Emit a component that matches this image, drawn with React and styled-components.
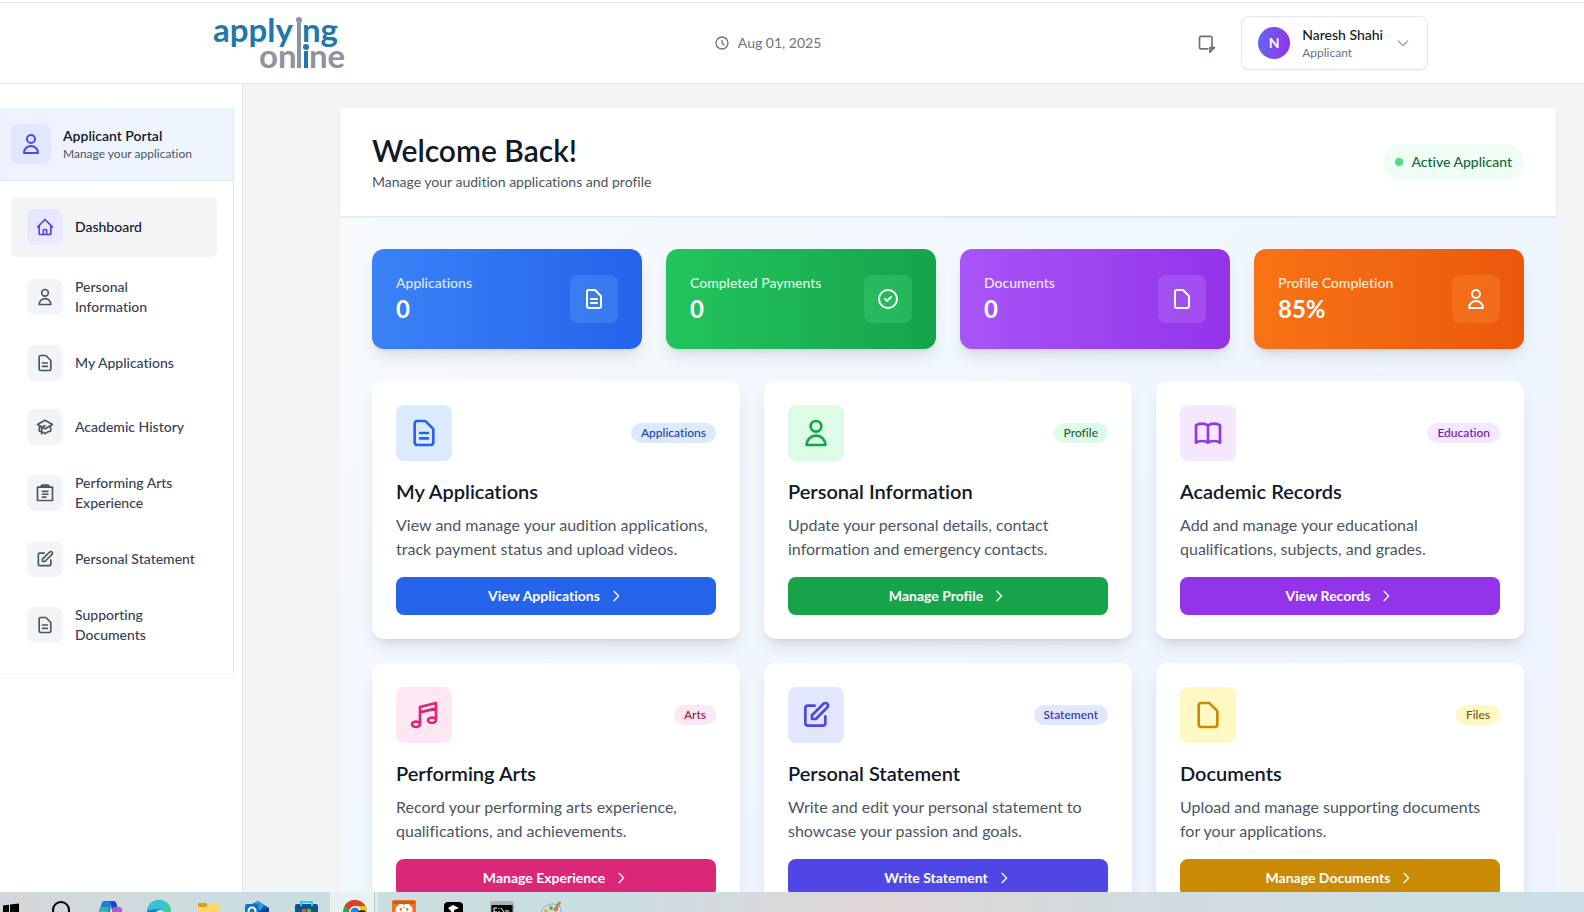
import React from "react"
import styled, { createGlobalStyle, css } from "styled-components"

const GlobalStyle = createGlobalStyle`
  *, *::before, *::after {
    box-sizing: border-box;
  }

  body {
    margin: 0;
    font-family: Lato, "Liberation Sans", sans-serif;
    font-size: 14px;
    line-height: 20px;
    font-variant-ligatures: none;
    color: #111827;
    background: #ffffff;
  }

  h1, h2, h3, p, ul {
    margin: 0;
    padding: 0;
  }

  ul {
    list-style: none;
  }

  button {
    font: inherit;
    font-variant-ligatures: none;
    cursor: pointer;
  }

  a {
    color: inherit;
    text-decoration: none;
  }
`

/* ---------- icons ---------- */

const paths = {
  user: [
    "M16 7a4 4 0 11-8 0 4 4 0 018 0z",
    "M12 14a7 7 0 00-7 7h14a7 7 0 00-7-7z",
  ],
  documentText: [
    "M9 12h6m-6 4h6m2 5H7a2 2 0 01-2-2V5a2 2 0 012-2h5.586a1 1 0 01.707.293l5.414 5.414a1 1 0 01.293.707V19a2 2 0 01-2 2z",
  ],
  document: [
    "M7 21h10a2 2 0 002-2V9.414a1 1 0 00-.293-.707l-5.414-5.414A1 1 0 0012.586 3H7a2 2 0 00-2 2v14a2 2 0 002 2z",
  ],
  home: [
    "M3 12l2-2m0 0l7-7 7 7M5 10v10a1 1 0 001 1h3m10-11l2 2m-2-2v10a1 1 0 01-1 1h-3m-6 0a1 1 0 001-1v-4a1 1 0 011-1h2a1 1 0 011 1v4a1 1 0 001 1m-6 0h6",
  ],
  academic: [
    "M12 14l9-5-9-5-9 5 9 5zm0 0l6.16-3.422a12.083 12.083 0 01.665 6.479A11.952 11.952 0 0012 20.055a11.952 11.952 0 00-6.824-2.998 12.078 12.078 0 01.665-6.479L12 14zm-4 6v-7.5l4-2.222",
  ],
  clipboard: [
    "M3 5h18v16H3z",
    "M7.500 5V3.500a1 1 0 011-1h7a1 1 0 011 1V5",
    "M8 4h8",
    "M9 10h6.500M9 13.500h6.500M9 17h4",
  ],
  edit: [
    "M11 5H6a2 2 0 00-2 2v11a2 2 0 002 2h11a2 2 0 002-2v-5m-1.414-9.414a2 2 0 112.828 2.828L11.828 15H9v-2.828l8.586-8.586z",
  ],
  check: ["M9 12l2 2 4-4m6 2a9 9 0 11-18 0 9 9 0 0118 0z"],
  book: [
    "M12 6.253v13m0-13C10.832 5.477 9.246 5 7.5 5S4.168 5.477 3 6.253v13C4.168 18.477 5.754 18 7.5 18s3.332.477 4.5 1.253m0-13C13.168 5.477 14.754 5 16.5 5c1.747 0 3.332.477 4.5 1.253v13C19.832 18.477 18.247 18 16.5 18c-1.746 0-3.332.477-4.5 1.253",
  ],
  music: [
    "M9 19V6l12-3v13M9 19c0 1.105-1.343 2-3 2s-3-.895-3-2 1.343-2 3-2 3 .895 3 2zm12-3c0 1.105-1.343 2-3 2s-3-.895-3-2 1.343-2 3-2 3 .895 3 2zM9 10l12-3",
  ],
  clock: ["M12 8v4l3 3m6-3a9 9 0 11-18 0 9 9 0 0118 0z"],
  chevronRight: ["M9 5l7 7-7 7"],
  chevronDown: ["M19 9l-7 7-7-7"],
  bell: [
    "M15.500 17.500h5.500l-5.500 5.500v-5.500z",
    "M17 18.500l1.500 0",
    "M13 19H5a2 2 0 01-2-2V6a2 2 0 012-2h11a2 2 0 012 2v11",
  ],
}

const Icon = ({ name, size }) => (
  <svg
    width={size}
    height={size}
    viewBox="0 0 24 24"
    fill="none"
    stroke="currentColor"
    strokeWidth="2"
    strokeLinecap="round"
    strokeLinejoin="round"
    aria-hidden="true"
  >
    {paths[name].map(d => (
      <path key={d} d={d} />
    ))}
  </svg>
)

/* ---------- shell ---------- */

const Desktop = styled.div`
  height: 100vh;
  display: flex;
  flex-direction: column;
`

const Page = styled.div`
  flex: 1;
  min-height: 0;
  display: flex;
  flex-direction: column;
  padding-top: 2px;
  overflow: hidden;
`

const TopBar = styled.header`
  flex: none;
  padding-left: 56px;
  background: #ffffff;
  border-top: 1px solid #e5e7eb;
  border-bottom: 1px solid #e5e7eb;
`

const TopBarInner = styled.div`
  max-width: 1216px;
  height: 80px;
  margin: 0 auto;
  display: flex;
  align-items: center;
  justify-content: space-between;
`

const LogoLink = styled.a`
  display: block;
  height: 72px;
`

const LogoText = styled.text`
  font-family: Lato, "Liberation Sans", sans-serif;
  font-size: 33px;
  font-weight: 700;
  fill: ${props => (props.$muted ? "#8d93a1" : "#1f78ac")};
`

const Today = styled.div`
  display: flex;
  align-items: center;
  gap: 8px;
  color: #6b7280;
`

const TopBarRight = styled.div`
  display: flex;
  align-items: center;
  gap: 16px;
`

const IconButton = styled.button`
  display: flex;
  padding: 8px;
  border: 0;
  border-radius: 8px;
  background: none;
  color: #6b7280;
`

const Account = styled.button`
  display: flex;
  align-items: center;
  gap: 12px;
  padding: 8px 16px;
  border: 1px solid #e5e7eb;
  border-radius: 8px;
  background: #ffffff;
  box-shadow: 0 1px 2px rgba(0, 0, 0, 0.05);
  color: #9ca3af;
  text-align: left;
`

const Avatar = styled.span`
  width: 32px;
  height: 32px;
  display: flex;
  align-items: center;
  justify-content: center;
  border-radius: 50%;
  background: linear-gradient(to right, #6366f1, #9333ea);
  color: #ffffff;
  font-weight: 700;
`

const AccountText = styled.span`
  display: flex;
  flex-direction: column;
`

const AccountName = styled.span`
  color: #111827;
  font-weight: 500;
`

const AccountRole = styled.span`
  color: #6b7280;
  font-size: 12px;
  line-height: 16px;
`

const Body = styled.div`
  flex: 1;
  min-height: 0;
  display: flex;
`

/* ---------- sidebar ---------- */

const Sidebar = styled.aside`
  flex: none;
  width: 243px;
  padding: 24px 8px 0 0;
  background: #ffffff;
  border-right: 1px solid #e5e7eb;
`

const SidebarPanel = styled.div`
  border-right: 1px solid #e5e7eb;
  border-bottom: 1px solid #f3f4f6;
`

const Portal = styled.div`
  display: flex;
  align-items: center;
  gap: 12px;
  padding: 16px 16px 16px 11px;
  border-bottom: 1px solid #e5e7eb;
  background: linear-gradient(to right, #eef2ff, #eff6ff);
`

const PortalIcon = styled.div`
  width: 40px;
  height: 40px;
  display: flex;
  align-items: center;
  justify-content: center;
  border-radius: 8px;
  background: #e0e7ff;
  color: #4f46e5;
`

const PortalTitle = styled.h2`
  font-size: 14px;
  line-height: 20px;
  font-weight: 600;
`

const PortalNote = styled.p`
  color: #4b5563;
  font-size: 12px;
  line-height: 16px;
`

const Nav = styled.nav`
  display: flex;
  flex-direction: column;
  gap: 8px;
  padding: 16px 16px 16px 11px;
`

const NavList = styled.ul`
  display: flex;
  flex-direction: column;
  gap: 4px;
`

const NavIcon = styled.span`
  flex: none;
  width: 36px;
  height: 36px;
  display: flex;
  align-items: center;
  justify-content: center;
  border-radius: 8px;
  background: #f3f4f6;
  color: #4b5563;
`

const NavLink = styled.a`
  display: flex;
  align-items: center;
  gap: 12px;
  padding: 12px 16px;
  border-radius: 6px;
  color: #374151;
  font-weight: 500;

  ${props =>
    props.$active &&
    css`
      background: #f3f4f6;
      color: #111827;

      ${NavIcon} {
        background: linear-gradient(to bottom right, #e0e7ff, #f3e8ff);
        color: #4f46e5;
      }
    `}
`

/* ---------- content ---------- */

const Main = styled.main`
  flex: 1;
  min-width: 0;
  padding: 24px 28px 0 97px;
  background: #f3f4f6;
  overflow: hidden;
`

const Panel = styled.div`
  padding-bottom: 200px;
  background: linear-gradient(to bottom right, #f8fafc, #eff6ff, #eef2ff);
`

const Welcome = styled.section`
  display: flex;
  align-items: center;
  justify-content: space-between;
  padding: 24px 32px;
  background: #ffffff;
  box-shadow: 0 1px 2px rgba(0, 0, 0, 0.1);
`

const WelcomeTitle = styled.h1`
  font-size: 30px;
  line-height: 36px;
  font-weight: 600;
`

const WelcomeNote = styled.p`
  margin-top: 4px;
  color: #4b5563;
`

const Status = styled.div`
  display: flex;
  align-items: center;
  gap: 8px;
  padding: 8px 12px;
  border-radius: 18px;
  background: #f0fdf4;
  color: #166534;
  font-weight: 500;
`

const StatusDot = styled.span`
  width: 8px;
  height: 8px;
  border-radius: 50%;
  background: #4ade80;
`

const Sections = styled.div`
  display: flex;
  flex-direction: column;
  gap: 32px;
  padding: 33px 32px;
`

const Stats = styled.div`
  display: grid;
  grid-template-columns: repeat(4, 1fr);
  gap: 24px;
`

const cardShadow = css`
  box-shadow: 0 10px 15px -3px rgba(0, 0, 0, 0.1),
    0 4px 6px -4px rgba(0, 0, 0, 0.1);
`

const Stat = styled.div`
  display: flex;
  align-items: center;
  justify-content: space-between;
  padding: 24px;
  border-radius: 12px;
  background: linear-gradient(
    to right,
    ${props => props.$from},
    ${props => props.$to}
  );
  color: #ffffff;
  ${cardShadow}
`

const StatLabel = styled.p`
  color: ${props => props.$color};
  font-weight: 500;
`

const StatValue = styled.p`
  font-size: 24px;
  line-height: 32px;
  font-weight: 700;
`

const StatIcon = styled.div`
  width: 48px;
  height: 48px;
  display: flex;
  align-items: center;
  justify-content: center;
  border-radius: 8px;
  background: ${props => props.$bg};
`

const Cards = styled.div`
  display: grid;
  grid-template-columns: repeat(3, 1fr);
  gap: 24px;
`

const Card = styled.article`
  padding: 24px;
  border-radius: 12px;
  background: #ffffff;
  ${cardShadow}
`

const CardTop = styled.div`
  display: flex;
  align-items: center;
  justify-content: space-between;
  margin-bottom: 16px;
`

const CardIcon = styled.div`
  width: 56px;
  height: 56px;
  display: flex;
  align-items: center;
  justify-content: center;
  border-radius: 8px;
  background: ${props => props.$bg};
  color: ${props => props.$color};
`

const Tag = styled.span`
  padding: 2px 10px;
  border-radius: 10px;
  background: ${props => props.$bg};
  color: ${props => props.$color};
  font-size: 12px;
  line-height: 16px;
  font-weight: 500;
`

const CardTitle = styled.h3`
  margin-bottom: 8px;
  font-size: 20px;
  line-height: 28px;
  font-weight: 600;
`

const CardText = styled.p`
  margin-bottom: 16px;
  color: #4b5563;
  font-size: 16px;
  line-height: 24px;
`

const CardButton = styled.button`
  width: 100%;
  display: flex;
  align-items: center;
  justify-content: center;
  gap: 8px;
  padding: 9px 16px;
  border: 0;
  border-radius: 8px;
  background: ${props => props.$color};
  color: #ffffff;
  font-weight: 700;
`

/* ---------- taskbar ---------- */

const Taskbar = styled.footer`
  flex: none;
  height: 20px;
  display: flex;
  overflow: hidden;
  background: linear-gradient(
    to right,
    #d4d6d8 0%,
    #cbdde1 15%,
    #cadde2 38%,
    #d9d8da 50%,
    #e0d6d5 56%,
    #d3dadd 68%,
    #c9dfe6 100%
  );
`

const Task = styled.div`
  flex: none;
  width: 49px;
  height: 40px;
  display: flex;
  justify-content: center;
  padding-top: 8px;

  &:first-child {
    width: 36px;
    justify-content: flex-start;
  }

  ${props =>
    props.$active &&
    css`
      background: linear-gradient(
        to right,
        #e8f1f2 44px,
        #b3c8cb 44px,
        #b3c8cb 45px,
        #dde9eb 45px,
        #dde9eb 48px,
        transparent 48px
      );
    `}
`

const TaskIcon = ({ children }) => (
  <svg width="24" height="24" viewBox="0 0 24 24" aria-hidden="true">
    {children}
  </svg>
)

const tasks = [
  {
    id: "start",
    icon: (
      <path
        fill="#000"
        d="M3 5.500l6-.8V13H3zM10 4.600l9-1.200V13h-9zM3 14h6v7l-6-1zM10 14h9v8.500L10 21z"
      />
    ),
  },
  {
    id: "search",
    icon: (
      <g fill="none" stroke="#000" strokeWidth="2">
        <circle cx="12" cy="10" r="8" />
        <path d="M7 17l-5 6" />
      </g>
    ),
  },
  {
    id: "copilot",
    icon: (
      <g>
        <path fill="#1b7fd6" d="M6 1h9c2 0 3 1 3.500 3L20 10h-6l-1-4-3 14H2C-1 20 0 15 1 12L3.500 4C4 2 4.500 1 6 1z" />
        <path fill="#1747b8" d="M11 1h4c2 0 3 1 3.500 3l1 4H14c-1-4-1-6-3-7z" />
        <path fill="#6fc14b" d="M1 11h9l-2 9H2c-3 0-2-5-1-9z" />
        <path fill="#35b1a3" d="M2 7h9l-1 4H1z" />
        <rect x="14" y="7" width="10" height="14" rx="3" fill="#b455d6" />
        <path fill="#d9599c" d="M14 12h10v6c0 3-3 4-5 4h-5z" />
      </g>
    ),
  },
  {
    id: "edge",
    icon: (
      <g>
        <circle cx="12" cy="12" r="12" fill="#1581d0" />
        <path fill="#35c3d6" d="M0 11C1 4 6 0 12 0c7 0 12 5 12 11 0 4-3 6-7 6 1-5-2-8-6-8-5 0-9 1-11 2z" />
        <path fill="#4bd07d" d="M17 1.200C21 3 24 7 24 11c0 4-3 6-7 6 1-2 1-3 .5-5C20 9 20 5 17 1.200z" />
        <ellipse cx="13" cy="13" rx="4" ry="3" fill="#d6eaf2" />
      </g>
    ),
  },
  {
    id: "files",
    icon: (
      <g>
        <path fill="#dc9f14" d="M2 3h8l2 2h10v5H2z" />
        <path fill="#ffd66b" d="M2 7h8l2-3h11v17H2z" />
      </g>
    ),
  },
  {
    id: "outlook",
    icon: (
      <g>
        <path fill="#0f5fb0" d="M5 5l8-4 11 7v14H5z" />
        <path fill="#2b9de3" d="M8 5l5-4 6 4-4 6z" />
        <path fill="#0a3f86" d="M14 11l10-3v6h-8z" />
        <rect x="0" y="4" width="14" height="16" rx="2" fill="#1272c8" />
        <circle cx="7" cy="11" r="3.500" fill="none" stroke="#fff" strokeWidth="2" />
      </g>
    ),
  },
  {
    id: "store",
    icon: (
      <g>
        <rect x="1" y="4" width="23" height="18" rx="2" fill="#12528f" />
        <path d="M7 6V2h11v4" fill="none" stroke="#35c4f5" strokeWidth="2" />
        <rect x="8" y="9" width="4" height="4" fill="#f25022" />
        <rect x="13" y="9" width="4" height="4" fill="#7fba00" />
      </g>
    ),
  },
  {
    id: "chrome",
    active: true,
    icon: (
      <g>
        <circle cx="12" cy="12" r="12" fill="#2da94f" />
        <path fill="#e33b2e" d="M2 5.500C4 2 8 0 12 0s8 2 10.500 6H12c-3 0-5 2-6 5z" />
        <path fill="#fbc116" d="M12 6h10.500c2 4 2 9-1 13L12 18z" />
        <circle cx="12" cy="12" r="6" fill="#fff" />
        <circle cx="12" cy="12" r="4.500" fill="#2f7de9" />
        <ellipse cx="19" cy="13" rx="4" ry="3" fill="#2c221d" />
      </g>
    ),
  },
  {
    id: "xampp",
    icon: (
      <g>
        <rect width="24" height="24" rx="2" fill="#ef7420" />
        <rect x="1" y="1" width="22" height="3" fill="#c95f1e" />
        <path
          fill="none"
          stroke="#fff"
          strokeWidth="4"
          strokeLinecap="round"
          d="M6 8c-1 3 0 5 2 5s4-2 4-5c0 3 2 5 4 5s3-2 2-5M8 6h2M14 6h2"
        />
      </g>
    ),
  },
  {
    id: "cursor",
    icon: (
      <g>
        <rect x="3" y="2" width="19" height="20" rx="4" fill="#000" />
        <path fill="#fff" d="M7 8l5-3 6 3-5 2v6l-3-5z" />
      </g>
    ),
  },
  {
    id: "terminal",
    icon: (
      <g>
        <rect x="1" y="2" width="22" height="20" fill="#0a0a0a" stroke="#8f9498" />
        <rect x="1" y="2" width="22" height="3" fill="#aeb3b6" />
        <path fill="none" stroke="#fff" d="M7 8H4v4h3M9 8v1M9 11v1M11 8l3 4M15 11h4" />
      </g>
    ),
  },
  {
    id: "paint",
    icon: (
      <g>
        <path fill="#cfe3ee" stroke="#78aac7" d="M2 15C2 8 8 4 14 4c5 0 8 3 8 7 0 6-6 10-12 10-5 0-8-2-8-6z" />
        <circle cx="7" cy="11" r="2" fill="#e8b62c" />
        <circle cx="12" cy="8" r="2" fill="#5cae3c" />
        <circle cx="17" cy="9" r="2" fill="#d84c32" />
        <path fill="none" stroke="#b98555" strokeWidth="3" d="M21 2l-6 9" />
      </g>
    ),
  },
]

/* ---------- data ---------- */

const navItems = [
  { label: "Personal Information", icon: "user" },
  { label: "My Applications", icon: "documentText" },
  { label: "Academic History", icon: "academic" },
  { label: "Performing Arts Experience", icon: "clipboard" },
  { label: "Personal Statement", icon: "edit" },
  { label: "Supporting Documents", icon: "documentText" },
]

const stats = [
  {
    label: "Applications",
    value: "0",
    icon: "documentText",
    from: "#3b82f6",
    to: "#2563eb",
    tint: "#dbeafe",
    box: "rgba(96, 165, 250, 0.3)",
  },
  {
    label: "Completed Payments",
    value: "0",
    icon: "check",
    from: "#22c55e",
    to: "#16a34a",
    tint: "#dcfce7",
    box: "rgba(74, 222, 128, 0.3)",
  },
  {
    label: "Documents",
    value: "0",
    icon: "document",
    from: "#a855f7",
    to: "#9333ea",
    tint: "#f3e8ff",
    box: "rgba(192, 132, 252, 0.3)",
  },
  {
    label: "Profile Completion",
    value: "85%",
    icon: "user",
    from: "#f97316",
    to: "#ea580c",
    tint: "#ffedd5",
    box: "rgba(251, 146, 60, 0.3)",
  },
]

const cards = [
  {
    title: "My Applications",
    text: "View and manage your audition applications, track payment status and upload videos.",
    tag: "Applications",
    action: "View Applications",
    icon: "documentText",
    color: "#2563eb",
    soft: "#dbeafe",
    deep: "#1e40af",
  },
  {
    title: "Personal Information",
    text: "Update your personal details, contact information and emergency contacts.",
    tag: "Profile",
    action: "Manage Profile",
    icon: "user",
    color: "#16a34a",
    soft: "#dcfce7",
    deep: "#166534",
  },
  {
    title: "Academic Records",
    text: "Add and manage your educational qualifications, subjects, and grades.",
    tag: "Education",
    action: "View Records",
    icon: "book",
    color: "#9333ea",
    soft: "#f3e8ff",
    deep: "#6b21a8",
  },
  {
    title: "Performing Arts",
    text: "Record your performing arts experience, qualifications, and achievements.",
    tag: "Arts",
    action: "Manage Experience",
    icon: "music",
    color: "#db2777",
    soft: "#fce7f3",
    deep: "#9d174d",
  },
  {
    title: "Personal Statement",
    text: "Write and edit your personal statement to showcase your passion and goals.",
    tag: "Statement",
    action: "Write Statement",
    icon: "edit",
    color: "#4f46e5",
    soft: "#e0e7ff",
    deep: "#3730a3",
  },
  {
    title: "Documents",
    text: "Upload and manage supporting documents for your applications.",
    tag: "Files",
    action: "Manage Documents",
    icon: "document",
    color: "#ca8a04",
    soft: "#fef9c3",
    deep: "#854d0e",
  },
]

// the tall grey stem is shared by the "i" of applying and the "l" of online
const Logo = () => (
  <LogoLink href="#home" aria-label="applying online">
    <svg width="134" height="72" viewBox="0 -8 134 72">
      <LogoText x="1" y="27">
        apply
      </LogoText>
      <LogoText x="90" y="27">
        ng
      </LogoText>
      <LogoText x="47" y="53" $muted>
        on
      </LogoText>
      <LogoText x="97" y="53" $muted>
        ne
      </LogoText>
      <rect x="85" y="8" width="4" height="45" fill="#8d93a1" />
      <circle cx="87" cy="5" r="3" fill="#8d93a1" />
      <rect x="92" y="36" width="4" height="17" fill="#1f78ac" />
      <circle cx="94" cy="32" r="3" fill="#1f78ac" />
    </svg>
  </LogoLink>
)

const NavItem = ({ label, icon, active }) => (
  <li>
    <NavLink
      href="#section"
      $active={active}
      aria-current={active ? "page" : undefined}
    >
      <NavIcon>
        <Icon name={icon} size={20} />
      </NavIcon>
      {label}
    </NavLink>
  </li>
)

const ActionCard = ({ title, text, tag, action, icon, color, soft, deep }) => (
  <Card>
    <CardTop>
      <CardIcon $bg={soft} $color={color}>
        <Icon name={icon} size={32} />
      </CardIcon>
      <Tag $bg={soft} $color={deep}>
        {tag}
      </Tag>
    </CardTop>
    <CardTitle>{title}</CardTitle>
    <CardText>{text}</CardText>
    <CardButton type="button" $color={color}>
      {action}
      <Icon name="chevronRight" size={16} />
    </CardButton>
  </Card>
)

const App = () => (
  <Desktop>
    <GlobalStyle />
    <Page>
      <TopBar>
        <TopBarInner>
          <Logo />
          <Today>
            <Icon name="clock" size={16} />
            Aug 01, 2025
          </Today>
          <TopBarRight>
            <IconButton type="button" aria-label="Notifications">
              <Icon name="bell" size={20} />
            </IconButton>
            <Account type="button">
              <Avatar>N</Avatar>
              <AccountText>
                <AccountName>Naresh Shahi</AccountName>
                <AccountRole>Applicant</AccountRole>
              </AccountText>
              <Icon name="chevronDown" size={16} />
            </Account>
          </TopBarRight>
        </TopBarInner>
      </TopBar>
      <Body>
        <Sidebar>
          <SidebarPanel>
            <Portal>
              <PortalIcon>
                <Icon name="user" size={24} />
              </PortalIcon>
              <div>
                <PortalTitle>Applicant Portal</PortalTitle>
                <PortalNote>Manage your application</PortalNote>
              </div>
            </Portal>
            <Nav>
              <NavList>
                <NavItem label="Dashboard" icon="home" active />
              </NavList>
              <NavList>
                {navItems.map(item => (
                  <NavItem key={item.label} {...item} />
                ))}
              </NavList>
            </Nav>
          </SidebarPanel>
        </Sidebar>
        <Main>
          <Panel>
            <Welcome>
              <div>
                <WelcomeTitle>Welcome Back!</WelcomeTitle>
                <WelcomeNote>
                  Manage your audition applications and profile
                </WelcomeNote>
              </div>
              <Status>
                <StatusDot />
                Active Applicant
              </Status>
            </Welcome>
            <Sections>
              <Stats>
                {stats.map(stat => (
                  <Stat key={stat.label} $from={stat.from} $to={stat.to}>
                    <div>
                      <StatLabel $color={stat.tint}>{stat.label}</StatLabel>
                      <StatValue>{stat.value}</StatValue>
                    </div>
                    <StatIcon $bg={stat.box}>
                      <Icon name={stat.icon} size={24} />
                    </StatIcon>
                  </Stat>
                ))}
              </Stats>
              <Cards>
                {cards.map(card => (
                  <ActionCard key={card.title} {...card} />
                ))}
              </Cards>
            </Sections>
          </Panel>
        </Main>
      </Body>
    </Page>
    <Taskbar>
      {tasks.map(task => (
        <Task key={task.id} $active={task.active}>
          <TaskIcon>{task.icon}</TaskIcon>
        </Task>
      ))}
    </Taskbar>
  </Desktop>
)

export default App
